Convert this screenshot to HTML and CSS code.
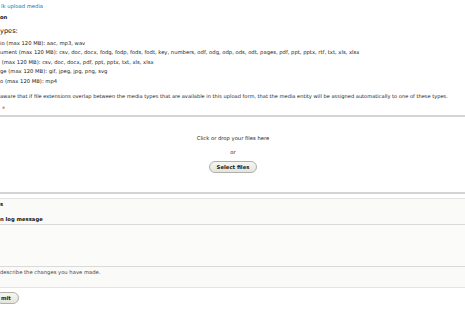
FILE: index.html
```html
<!DOCTYPE html>
<html lang="en">
<head>
  <meta charset="UTF-8" />
  <meta name="viewport" content="width=device-width, initial-scale=1.0"/>
  <title>Bulk upload media</title>
  <link rel="stylesheet" href="styles.css">
</head>
<body>
  <div class="page">
    <a class="crumb" href="#">lk upload media</a>
    <div class="section-title">on</div>

    <div class="types">
      <div class="types-label">ypes:</div>
      <ul class="type-list">
        <li>io (max 120 MB): aac, mp3, wav</li>
        <li>ument (max 120 MB): csv, doc, docx, fodg, fodp, fods, fodt, key, numbers, odf, odg, odp, ods, odt, pages, pdf, ppt, pptx, rtf, txt, xls, xlsx</li>
        <li>&nbsp;(max 120 MB): csv, doc, docx, pdf, ppt, pptx, txt, xls, xlsx</li>
        <li>ge (max 120 MB): gif, jpeg, jpg, png, svg</li>
        <li>o (max 120 MB): mp4</li>
      </ul>
      <p class="note">aware that if file extensions overlap between the media types that are available in this upload form, that the media entity will be assigned automatically to one of these types.</p>
    </div>

    <div class="field-label"><span class="req">*</span></div>

    <div class="dropzone">
      <p class="dz-msg">Click or drop your files here</p>
      <p class="dz-or">or</p>
      <button class="button" type="button">Select files</button>
    </div>

    <div class="revision">
      <div class="revision-title">s</div>
      <label class="revision-label">n log message</label>
      <div class="textarea"></div>
      <div class="description">describe the changes you have made.</div>
    </div>

    <button class="button submit" type="submit">mit</button>
  </div>
</body>
</html>
```

FILE: styles.css
```css
body {
  font-family: 'DejaVu Sans', sans-serif;
  font-size: 5.25px;
  color: #222;
  background-color: #fff;
  margin: 0;
  overflow: hidden;
}

.page {
  width: 490px;
  margin-left: -12px;
}

.crumb,
.section-title,
.types,
.field-label {
  margin-left: 12px;
}

.crumb {
  display: block;
  margin-top: 2px;
  padding-left: 1px;
  line-height: 8px;
  color: #0074bd;
  text-decoration: none;
}

.section-title {
  margin-top: 3px;
  line-height: 8px;
  font-weight: bold;
  color: #111;
}

.types-label {
  margin-top: 5px;
  line-height: 10px;
  font-size: 6.6px;
  color: #111;
}

.type-list {
  list-style: none;
  margin: 2.5px 0 0;
  padding: 0;
}

.type-list li {
  line-height: 9.5px;
  white-space: nowrap;
}

.note {
  margin: 5.5px 0 0;
  line-height: 8px;
  font-size: 5.1px;
  white-space: nowrap;
}

.field-label {
  margin-top: 5.5px;
  line-height: 8px;
}

.req {
  margin-left: 2px;
  color: #dc2323;
  font-size: 6.5px;
}

.dropzone {
  margin-top: 1.5px;
  padding: 17px 0 19px;
  border-top: 2px solid #d4d4d4;
  border-bottom: 2px solid #d4d4d4;
  text-align: center;
  background: #fff;
}

.dz-msg,
.dz-or {
  margin: 0;
  line-height: 8px;
}

.dz-or {
  margin-top: 6px;
}

.button {
  display: inline-block;
  height: 12px;
  margin-top: 5px;
  padding: 0 7px;
  border: 1px solid #b0b0ab;
  border-radius: 20em;
  background: linear-gradient(to bottom, #f6f6f3, #e5e5dd);
  font-family: 'DejaVu Sans', sans-serif;
  font-size: 5.3px;
  font-weight: bold;
  color: #222;
  line-height: 10px;
  vertical-align: top;
}

.revision {
  margin-top: 4px;
  padding: 1px 0 11px 12px;
  border-top: 1px solid #e3e3e1;
  border-bottom: 1px solid #e3e3e1;
  background: #fafaf8;
}

.revision-title {
  line-height: 8px;
  font-weight: bold;
  color: #111;
}

.revision-label {
  display: block;
  margin-top: 7px;
  line-height: 8px;
  font-weight: bold;
  color: #111;
}

.textarea {
  height: 41px;
  margin: 1px 0 0 -12px;
  border-top: 1px solid #dadad8;
  border-bottom: 1px solid #dadad8;
  background: #fbfbf9;
}

.description {
  margin-top: 1px;
  line-height: 8px;
  color: #444;
}

.submit {
  display: block;
  margin-top: 4px;
  margin-left: 8px;
  padding: 0 7px 0 4px;
}
```
